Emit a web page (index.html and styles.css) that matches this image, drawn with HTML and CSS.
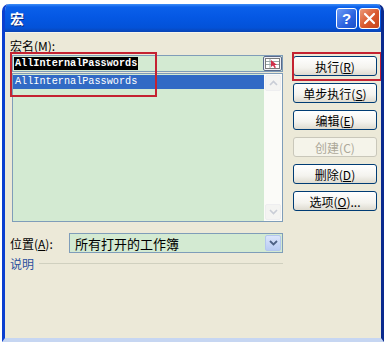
FILE: index.html
```html
<!DOCTYPE html>
<html lang="zh-CN">
<head>
    <meta charset="UTF-8">
    <title>宏</title>
    <link rel="stylesheet" href="styles.css">
</head>
<body>
    <div class="window">
        <!-- 标题栏 -->
        <div class="titlebar">
            <span class="title">宏</span>
            <div class="title-buttons">
                <span class="tb-btn tb-help">?</span>
                <span class="tb-btn tb-close">
                    <svg width="13" height="13" viewBox="0 0 13 13"><path d="M2 2 L11 11 M11 2 L2 11" stroke="#fff" stroke-width="2.2" stroke-linecap="round"/></svg>
                </span>
            </div>
        </div>

        <div class="client">
            <div class="left">
                <div class="label">宏名(<u>M</u>):</div>
                <div class="name-field">
                    <span class="name-sel">AllInternalPasswords</span>
                    <span class="ref-btn">
                        <svg width="15" height="11" viewBox="0 0 15 11">
                            <rect x="0.5" y="0.5" width="14" height="10" fill="#fff" stroke="#7a7a7a"/>
                            <path d="M1 3.5 H14 M1 6.5 H14 M5 1 V10" stroke="#9aa" stroke-width="1"/>
                            <path d="M6 2 L12 7 L9.5 7 L11 9.5 L9.5 10 L8 7.5 L6 9 Z" fill="#d0304a"/>
                        </svg>
                    </span>
                </div>
                <div class="listbox">
                    <div class="list-items">
                        <div class="list-item selected">AllInternalPasswords</div>
                    </div>
                    <div class="scrollbar">
                        <span class="sb-btn">
                            <svg width="9" height="6" viewBox="0 0 9 6"><path d="M1 5 L4.5 1.5 L8 5" fill="none" stroke="#c9cdd6" stroke-width="1.6"/></svg>
                        </span>
                        <span class="sb-btn">
                            <svg width="9" height="6" viewBox="0 0 9 6"><path d="M1 1 L4.5 4.5 L8 1" fill="none" stroke="#c9cdd6" stroke-width="1.6"/></svg>
                        </span>
                    </div>
                </div>

                <div class="location-row">
                    <span class="label">位置(<u>A</u>):</span>
                    <div class="combo">
                        <span class="combo-text">所有打开的工作簿</span>
                        <span class="combo-btn">
                            <svg width="9" height="6" viewBox="0 0 9 6"><path d="M1 1 L4.5 4.5 L8 1" fill="none" stroke="#4d6185" stroke-width="1.8"/></svg>
                        </span>
                    </div>
                </div>

                <div class="desc-row">
                    <span class="desc-label">说明</span>
                    <span class="desc-line"></span>
                </div>
            </div>

            <div class="right">
                <button class="btn">执行(<u>R</u>)</button>
                <button class="btn">单步执行(<u>S</u>)</button>
                <button class="btn">编辑(<u>E</u>)</button>
                <button class="btn" disabled>创建(C)</button>
                <button class="btn">删除(<u>D</u>)</button>
                <button class="btn">选项(<u>O</u>)...</button>
            </div>
        </div>

        <!-- 红框标注 -->
        <div class="mark mark-name"></div>
        <div class="mark mark-run"></div>
    </div>
</body>
</html>
```

FILE: styles.css
```css
* { margin: 0; padding: 0; box-sizing: border-box; }
body { background: #fff; font-family: "Noto Sans CJK SC", "Liberation Sans", sans-serif; font-size: 12px; color: #000; }
u { text-decoration: underline; }

.window { position: relative; width: 382px; height: 338px; margin: 4px 0 0 2px; background: #ece9d8; border-left: 3px solid #0b3fd0; border-right: 3px solid #0a2a8e; border-bottom: 4px solid #c6d6f2; border-radius: 7px 7px 0 0; overflow: hidden; }

.titlebar { height: 28px; margin-left: -3px; margin-right: -3px; padding: 0 4px 0 8px; display: flex; align-items: center; justify-content: space-between; background: linear-gradient(#3d8df7 0, #0b60ea 3px, #0558e4 45%, #0352d8 85%, #0a44b4 100%); }
.title { color: #fff; font-weight: bold; font-size: 14px; text-shadow: 1px 1px #0a2a80; }
.title-buttons { display: flex; gap: 2px; }
.tb-btn { width: 21px; height: 21px; border: 1px solid #fff; border-radius: 3px; display: flex; align-items: center; justify-content: center; color: #fff; font-family: "Liberation Sans", sans-serif; font-weight: bold; font-size: 15px; }
.tb-help { background: linear-gradient(135deg, #6d9cf5, #2a62e0 60%, #1b4fc8); }
.tb-close { background: linear-gradient(135deg, #ec9a7a, #d9572c 55%, #c6441c); }

.client { display: flex; height: 306px; border-top: 1px solid #f6f4ec; }
.left { width: 278px; padding-left: 5px; }
.left > .label { margin: 5px 0 0 0; height: 15px; line-height: 15px; }
.label { white-space: nowrap; }

.name-field { height: 17px; margin: 2px 0 0 2px; border: 1px solid #7f9db9; background: #d3ead2; display: flex; align-items: center; justify-content: space-between; padding-left: 1px; }
.name-sel { background: #000; color: #fff; font-family: "Liberation Mono", monospace; font-size: 10.2px; font-weight: bold; line-height: 13px; padding: 0 1px; }
.ref-btn { width: 19px; height: 15px; border: 1px solid #5a6a8a; border-radius: 2px; background: #eef0f5; display: flex; align-items: center; justify-content: center; }

.listbox { height: 149px; margin: 1px 0 0 2px; border: 1px solid #7f9db9; background: #d3ead2; display: flex; }
.list-items { flex: 1; padding: 1px 0 0 0; }
.list-item { height: 14px; line-height: 14px; font-family: "Liberation Mono", monospace; font-size: 10.2px; padding-left: 2px; }
.list-item.selected { background: #316ac5; color: #fff; }
.scrollbar { width: 18px; background: #fbfbf8; display: flex; flex-direction: column; justify-content: space-between; padding: 1px; }
.sb-btn { height: 16px; border: 1px solid #eeeef0; border-radius: 2px; background: #f4f4f2; display: flex; align-items: center; justify-content: center; }

.location-row { display: flex; align-items: center; margin-top: 11px; height: 20px; }
.location-row .label { width: 59px; }
.combo { flex: 1; height: 20px; border: 1px solid #7f9db9; background: #d3ead2; display: flex; align-items: center; justify-content: space-between; padding: 0 1px 0 5px; font-size: 13px; }
.combo-btn { width: 16px; height: 16px; border-radius: 2px; background: linear-gradient(#dbe5fb, #b8cbf3); border: 1px solid #b3c6ee; display: flex; align-items: center; justify-content: center; }

.desc-row { display: flex; align-items: center; margin-top: 3px; height: 15px; }
.desc-label { color: #2a4f9e; }
.desc-line { flex: 1; height: 1px; margin-left: 5px; background: #d0d0bf; }

.right { width: 84px; margin-left: 10px; padding-top: 23px; display: flex; flex-direction: column; gap: 7px; }
.btn { height: 20px; border: 1px solid #003c74; border-radius: 3px; background: linear-gradient(#ffffff, #f4f3ee 60%, #dedbd0); font-family: "Noto Sans CJK SC", sans-serif; font-size: 12px; color: #000; display: flex; align-items: center; justify-content: center; }
.btn:disabled { border-color: #c9c7ba; background: #f5f4ea; color: #aca899; }

.mark { position: absolute; border: 2px solid #c42231; }
.mark-name { left: 5px; top: 48px; width: 147px; height: 45px; }
.mark-run { left: 287px; top: 48px; width: 90px; height: 29px; }
```
